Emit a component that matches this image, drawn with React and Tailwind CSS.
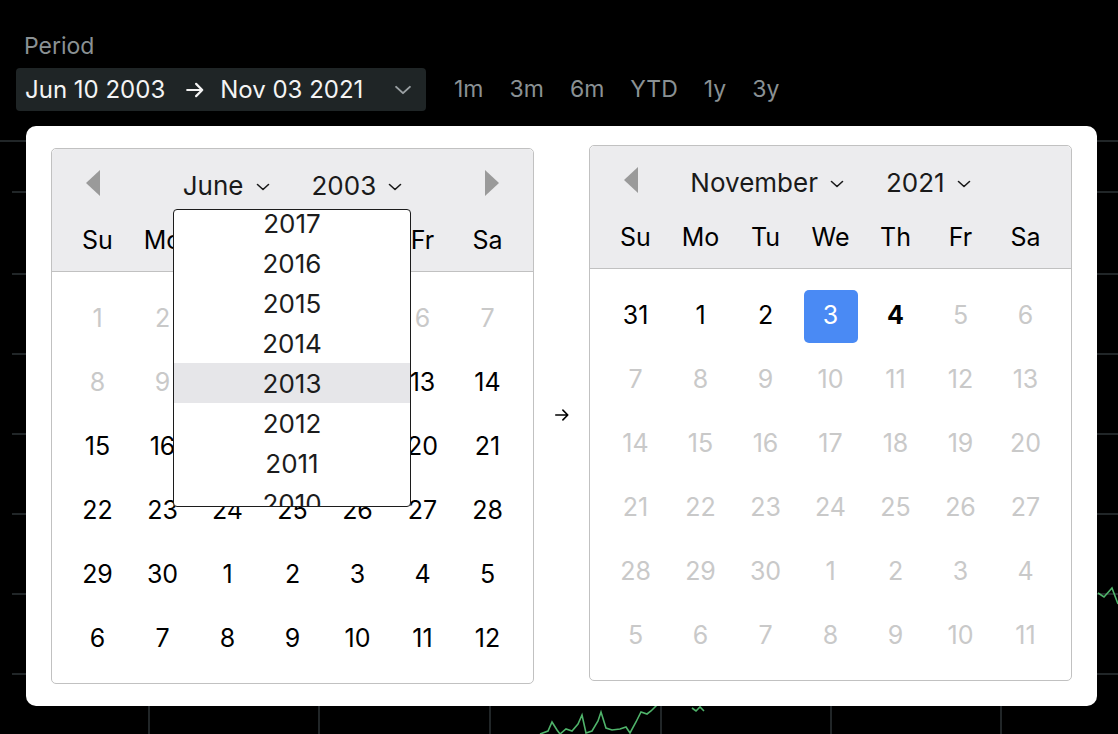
import React from 'react';

const DOW = ['Su', 'Mo', 'Tu', 'We', 'Th', 'Fr', 'Sa'];

// state: 'muted' | 'normal' | 'selected' | 'today'
const leftWeeks = [
  [[1, 'muted'], [2, 'muted'], [3, 'muted'], [4, 'muted'], [5, 'muted'], [6, 'muted'], [7, 'muted']],
  [[8, 'muted'], [9, 'muted'], [10, 'selected'], [11, 'normal'], [12, 'normal'], [13, 'normal'], [14, 'normal']],
  [[15], [16], [17], [18], [19], [20], [21]],
  [[22], [23], [24], [25], [26], [27], [28]],
  [[29], [30], [1], [2], [3], [4], [5]],
  [[6], [7], [8], [9], [10], [11], [12]],
];

const rightWeeks = [
  [[31], [1], [2], [3, 'selected'], [4, 'today'], [5, 'muted'], [6, 'muted']],
  [7, 8, 9, 10, 11, 12, 13].map((d) => [d, 'muted']),
  [14, 15, 16, 17, 18, 19, 20].map((d) => [d, 'muted']),
  [21, 22, 23, 24, 25, 26, 27].map((d) => [d, 'muted']),
  [28, 29, 30, 1, 2, 3, 4].map((d) => [d, 'muted']),
  [5, 6, 7, 8, 9, 10, 11].map((d) => [d, 'muted']),
];

const years = [2017, 2016, 2015, 2014, 2013, 2012, 2011, 2010];

const Chevron = ({ className = '' }) => (
  <svg className={className} width="14" height="8" viewBox="0 0 14 8" fill="none">
    <path d="M1.5 1.5L7 6.5L12.5 1.5" stroke="currentColor" strokeWidth="1.6" strokeLinecap="round" strokeLinejoin="round" />
  </svg>
);

const Arrow = ({ className = '', size = 18, stroke = 2 }) => (
  <svg className={className} width={size} height={size} viewBox="0 0 18 18" fill="none">
    <path d="M2 9H15.5M10 3.5L15.5 9L10 14.5" stroke="currentColor" strokeWidth={stroke} strokeLinecap="round" strokeLinejoin="round" />
  </svg>
);

const Triangle = ({ dir }) => (
  <svg width="14" height="26" viewBox="0 0 14 26">
    {dir === 'left' ? <path d="M14 0V26L0 13Z" fill="#9a9a9a" /> : <path d="M0 0V26L14 13Z" fill="#9a9a9a" />}
  </svg>
);

const Day = ({ value, state = 'normal' }) => {
  if (state === 'selected') {
    return (
      <div className="w-[65px] h-[64px] flex items-center justify-center">
        <div className="w-[54px] h-[53px] rounded-[5px] bg-[#4a8af4] text-white flex items-center justify-center">{value}</div>
      </div>
    );
  }
  const tone = state === 'muted' ? 'text-[#c9c9c9]' : state === 'today' ? 'text-black font-bold' : 'text-black';
  return <div className={`w-[65px] h-[64px] flex items-center justify-center ${tone}`}>{value}</div>;
};

const Calendar = ({ month, year, weeks, showNext, className = '', children }) => (
  <div className={`relative w-[483px] h-[536px] border border-[#c1c1c1] rounded-[5px] bg-white ${className}`}>
    <div className="relative h-[123px] bg-[#ececee] border-b border-[#c1c1c1] rounded-t-[5px] px-[13px]">
      <div className="absolute left-[34px] top-[21px]">
        <Triangle dir="left" />
      </div>
      {showNext && (
        <div className="absolute left-[433px] top-[21px]">
          <Triangle dir="right" />
        </div>
      )}
      <div className="h-[73px] flex items-center justify-center gap-[42px] text-[26px] text-[#1a1a1a]">
        <div className="flex items-center gap-[12px]">
          <span>{month}</span>
          <Chevron className="mt-[3px]" />
        </div>
        <div className="flex items-center gap-[12px]">
          <span>{year}</span>
          <Chevron className="mt-[3px]" />
        </div>
      </div>
      <div className="grid grid-cols-7 h-[36px] text-[25px] text-black">
        {DOW.map((d) => (
          <div key={d} className="flex items-center justify-center">{d}</div>
        ))}
      </div>
    </div>
    <div className="px-[13px] pt-[15px] pb-[11px] text-[25px]">
      {weeks.map((w, i) => (
        <div key={i} className="flex">
          {w.map(([v, s], j) => (
            <Day key={j} value={v} state={s} />
          ))}
        </div>
      ))}
    </div>
    {children}
  </div>
);

const ChartBackdrop = () => (
  <svg className="absolute inset-0" width="1118" height="734" viewBox="0 0 1118 734" fill="none">
    <g stroke="#2c3336" strokeWidth="1.5">
      <line x1="0" y1="141" x2="1118" y2="141" />
      {[192, 274, 354, 434, 514, 594, 674].map((y) => (
        <line key={y} x1="12" y1={y} x2="1118" y2={y} />
      ))}
      {[149, 319, 490, 661, 831, 1001].map((x) => (
        <line key={x} x1={x} y1="141" x2={x} y2="734" />
      ))}
    </g>
    <polyline
      stroke="#4fb36a"
      strokeWidth="1.6"
      fill="none"
      points="540,734 548,731 552,722 557,730 560,734 566,729 572,731 578,724 582,715 586,733 592,731 598,721 601,712 606,728 612,730 620,729 626,727 630,733 636,722 641,712 647,714 651,711 655,707 660,702 665,699"
    />
    <polyline stroke="#4fb36a" strokeWidth="1.6" fill="none" points="692,708 696,711 700,707 704,711" />
    <polyline stroke="#4fb36a" strokeWidth="1.6" fill="none" points="1098,593 1104,597 1112,588 1118,604" />
  </svg>
);

export default function App() {
  return (
    <div className="relative w-[1118px] h-[734px] bg-black overflow-hidden font-['Inter',sans-serif]">
      <ChartBackdrop />

      <div className="relative pt-[31px] pl-[16px]">
        <div className="pl-[8px] text-[23px] leading-[30px] text-[#8a9194]">Period</div>
        <div className="mt-[7px] flex items-center">
          <button className="w-[410px] h-[43px] rounded-[4px] bg-[#1f2526] flex items-center pl-[9px] pr-[16px] text-[24px] text-[#f4f4f4]">
            <span>Jun 10 2003</span>
            <Arrow className="ml-[20px] mr-[15px]" size={20} />
            <span>Nov 03 2021</span>
            <Chevron className="ml-auto text-[#9aa0a3] scale-[1.25]" />
          </button>
          <div className="ml-[28px] flex items-center gap-[26px] text-[23px] text-[#8a9194]">
            <span>1m</span>
            <span>3m</span>
            <span>6m</span>
            <span>YTD</span>
            <span>1y</span>
            <span>3y</span>
          </div>
        </div>
      </div>

      <div className="absolute left-[26px] top-[126px] w-[1071px] h-[580px] bg-white rounded-[10px] pl-[25px] pt-[19px] flex items-start">
        <Calendar month="June" year="2003" weeks={leftWeeks} showNext className="mt-[3px]">
          <div className="absolute left-[121px] top-[60px] w-[238px] h-[298px] border-[1.5px] border-[#1c1c1c] rounded-[4px] bg-white overflow-hidden">
            <div className="-mt-[7px]">
              {years.map((y) => (
                <div
                  key={y}
                  className={`h-[40px] flex items-center justify-center text-[26px] text-[#1c1c1c] ${y === 2013 ? 'bg-[#e6e6e9]' : ''}`}
                >
                  {y}
                </div>
              ))}
            </div>
          </div>
        </Calendar>
        <div className="w-[55px] h-[539px] flex items-center justify-center text-black">
          <Arrow size={16} stroke={1.8} />
        </div>
        <Calendar month="November" year="2021" weeks={rightWeeks} />
      </div>
    </div>
  );
}
